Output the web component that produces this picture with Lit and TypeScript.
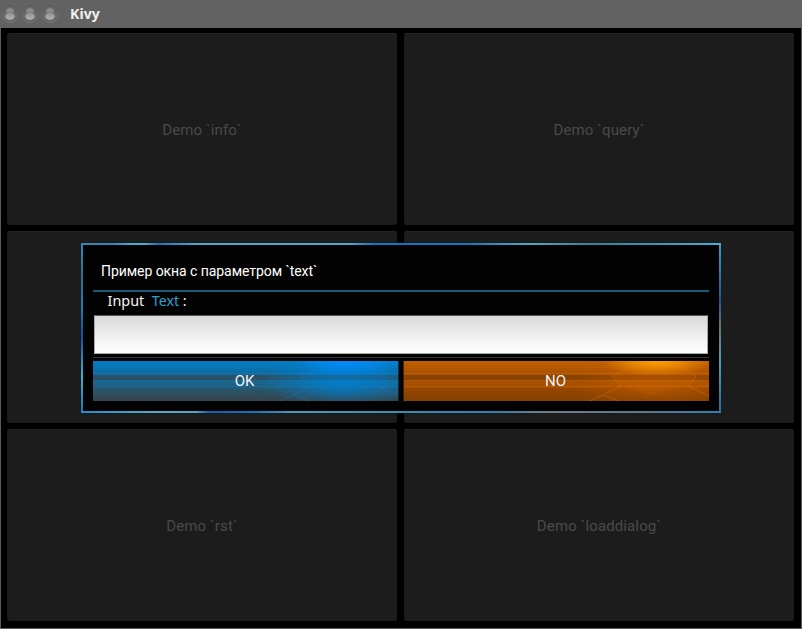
import { LitElement, html, css, svg } from "lit";
import { customElement, property } from "lit/decorators.js";

@customElement("glow-button")
class GlowButton extends LitElement {
  @property() tone = "blue";
  @property() label = "";

  static styles = css`
    :host { display: block; position: relative; height: 40px; overflow: hidden; }
    svg { position: absolute; left: 0; top: 0; width: 100%; height: 100%; }
    .label {
      position: relative; display: block; text-align: center; color: #f2f5f7;
      font: 15px/40px Roboto, sans-serif; margin-right: 3px;
    }
    :host([tone="orange"]) .label { margin-right: 1px; }
  `;

  render() {
    const blue = this.tone === "blue";
    const stops = blue
      ? ["#007fc6", "#0b6fa9", "#22607f", "#2b5366", "#35434b"]
      : ["#c06000", "#ae5400", "#9b4a00", "#914500", "#864000"];
    const glow = blue ? "#008cff" : "#ffa000";
    const mid = blue ? "#007fd0" : "#cc6200";
    const edge = blue ? "#1689ca" : "#ee8210";
    const band = blue ? "#334650" : "#7c3a00";
    const shine = blue ? "#0a70a8" : "#c45c00";
    const spread = blue ? 1 : 0.65;
    return html`
      <svg viewBox="0 0 306 40" preserveAspectRatio="none">
        ${svg`
          <defs>
            <linearGradient id="base" x1="0" y1="0" x2="0" y2="1">
              ${stops.map((c, i) => svg`<stop offset=${i / 4} stop-color=${c}></stop>`)}
            </linearGradient>
            <radialGradient id="top"><stop offset="0" stop-color=${glow}></stop>
              <stop offset=".4" stop-color=${glow} stop-opacity=".65"></stop>
              <stop offset="1" stop-color=${glow} stop-opacity="0"></stop></radialGradient>
            <radialGradient id="core"><stop offset="0" stop-color=${mid} stop-opacity=".85"></stop>
              <stop offset=".5" stop-color=${mid} stop-opacity=".5"></stop>
              <stop offset="1" stop-color=${mid} stop-opacity="0"></stop></radialGradient>
          </defs>
          <rect width="306" height="40" fill="url(#base)"></rect>
          <rect y="14" width="306" height="5" fill=${band} opacity=".5"></rect>
          <rect y="19" width="306" height="8" fill=${shine} opacity=".3"></rect>
          <ellipse cx="252" cy="20" rx="84" ry="26" fill="url(#core)" opacity=${spread}></ellipse>
          <path d="M237 0L209 15.5L218 25L246 34L285 25L293 15.5L272 0Z" fill=${mid} opacity=".22"></path>
          <ellipse cx="254" cy="0" rx="56" ry="15" fill="url(#top)"></ellipse>
          <rect y="14" width="306" height="5" fill=${band} opacity=".22"></rect>
          <g fill="none" stroke=${edge} stroke-width=".8" opacity=".42">
            <path d="M237 0L209 15.5L218 25L187 40M272 0L293 15.5L285 25L306 35"></path>
            <path d="M200 34L216 40"></path>
          </g>
          <g fill=${edge} opacity=".25">
            <rect y="6" width="306" height="1" opacity=".4"></rect>
            <rect y="12" width="306" height="1"></rect>
            <rect y="19" width="306" height="1" opacity=".5"></rect>
            <rect y="25" width="306" height="1"></rect>
          </g>
          <rect x="305" width="1" height="40" fill="#04131d" opacity=${blue ? 0.7 : 0}></rect>
          <rect width="1" height="40" fill="#201000" opacity=${blue ? 0 : 0.7}></rect>`}
      </svg>
      <span class="label">${this.label}</span>`;
  }
}

@customElement("app-root")
class AppRoot extends LitElement {
  static styles = css`
    :host { display: block; width: 802px; height: 629px; overflow: hidden; position: relative; }
    .window {
      box-sizing: border-box; height: 629px; display: flex; flex-direction: column;
      border: solid #5c5a5b; border-width: 0 1px 1px; background: #000;
    }
    .bar {
      flex: none; height: 28px; background: #626262; margin: 0 -1px; padding-left: 1px;
      display: flex; align-items: center;
    }
    .controls { display: block; width: 60px; height: 28px; }
    .name { margin-left: 9px; font: bold 14px/28px "Noto Sans", sans-serif; color: #f0f0f0; letter-spacing: .1px; }
    .grid {
      flex: 1; display: grid; grid-template-columns: 390px 390px; grid-template-rows: repeat(3, 191.5px);
      column-gap: 7px; row-gap: 6.5px; padding: 5px 6px 0;
    }
    .cell {
      box-sizing: border-box; display: flex; align-items: center; justify-content: center;
      background: #1c1c1c; border: 1px solid #191919; border-top-color: #242424; border-radius: 2px;
      color: #4a4a4a; font: 15px/20px Roboto, sans-serif; padding-top: 2px; letter-spacing: .12px;
    }
    .dialog {
      position: absolute; left: 81px; top: 243px; width: 640px; height: 170px; box-sizing: border-box;
      padding: 2px;
      background:
        linear-gradient(90deg, #3982b2 0 5%, #4eabd0 8% 10%, #2372bd 12%, #51a6c9 18% 42%, #1872bd 46% 60%, #59a5bf 70%, #397f9b 80%, #4cacd2) 0 0 / 100% 2px no-repeat,
        linear-gradient(90deg, #298bcb, #52abc9 12%, #52a4c3 18%, #145eae 20%, #1772bd 27%, #4a9bbd 33%, #337eb0 65%, #6c7f8d 72%, #5d778c 88%, #2b80bb) 0 100% / 100% 2px no-repeat,
        linear-gradient(#328bbd, #336c92 18%, #2478b0 38%, #164e9b 55%, #4daacc 78%, #2173ae) 0 0 / 2px 100% no-repeat,
        linear-gradient(#3c9dca, #277baa 18%, #1d579a 34%, #66727a 48%, #48a2bb 70%, #236ba0) 100% 0 / 2px 100% no-repeat;
    }
    .body {
      height: 166px; box-sizing: border-box; padding: 0 10px;
      background: #030303; display: flex; flex-direction: column;
    }
    .title {
      box-sizing: border-box; height: 45px; padding-left: 8px; color: #fff;
      font: 14px/52px Roboto, sans-serif; letter-spacing: -.06px;
    }
    .rule { flex: none; height: 2px; background: #195c78; }
    .prompt {
      flex: none; height: 23px; padding-left: 14.6px; color: #f4f4f4; white-space: pre;
      font: 14.4px/18px "Noto Sans", sans-serif;
    }
    .prompt .accent { color: #2ba0cf; margin: 0 3.4px 0 3.6px; }
    .field {
      flex: none; box-sizing: border-box; height: 39px; margin: 0 1px; border: 1px solid #aaa;
      border-top-color: #555; background: linear-gradient(#dadada, #fcfcfc 90%);
    }
    .thin { flex: none; height: 1px; margin-top: 3px; background: #353535; }
    .actions { display: grid; grid-template-columns: 306px 306px; gap: 4px; margin-top: 3px; }
  `;

  render() {
    const cells = ["Demo `info`", "Demo `query`", "", "", "Demo `rst`", "Demo `loaddialog`"];
    return html`
      <div class="window">
        <div class="bar">
          <svg class="controls" viewBox="1 0 60 28">
            <defs>
              <linearGradient id="knob" x1="0" y1="0" x2="0" y2="1">
                <stop offset="0" stop-color="#8e8e8e"></stop><stop offset="1" stop-color="#b4b4b4"></stop>
              </linearGradient>
              <linearGradient id="ring" x1="0" y1="0" x2="0" y2="1">
                <stop offset="0" stop-color="#5a5a5a"></stop><stop offset="1" stop-color="#707070"></stop>
              </linearGradient>
            </defs>
            ${[10, 30, 50].map((x) => svg`
              <circle cx=${x} cy="14" r="9" fill="url(#ring)"></circle>
              <circle cx=${x} cy="14" r="7.6" fill="#686868"></circle>
              <ellipse cx=${x} cy="11" rx="3.6" ry="2.8" fill="#8c8c8c"></ellipse>
              <ellipse cx=${x} cy="16.2" rx="4.8" ry="3.6" fill="url(#knob)"></ellipse>
              <rect x=${x - 3.5} y="12" width="7" height="1" fill="#808080"></rect>`)}
          </svg>
          <span class="name">Kivy</span>
        </div>
        <div class="grid">${cells.map((c) => html`<div class="cell">${c}</div>`)}</div>
      </div>
      <div class="dialog">
        <div class="body">
          <div class="title">Пример окна с параметром \`text\`</div>
          <div class="rule"></div>
          <div class="prompt">Input <span class="accent">Text</span>:</div>
          <div class="field"></div>
          <div class="thin"></div>
          <div class="actions">
            <glow-button tone="blue" label="OK"></glow-button>
            <glow-button tone="orange" label="NO"></glow-button>
          </div>
        </div>
      </div>`;
  }
}
